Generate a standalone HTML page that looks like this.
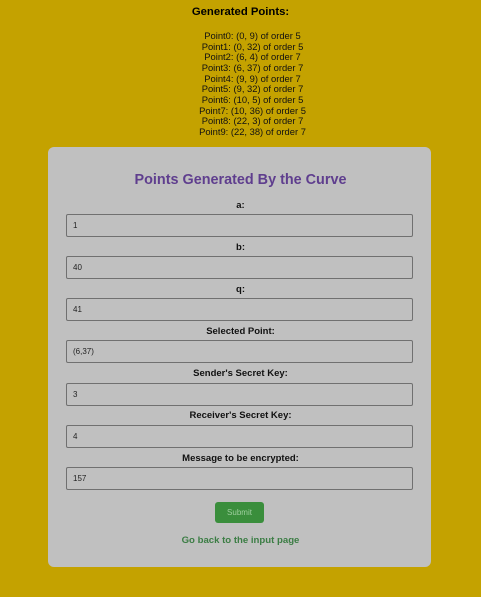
<!DOCTYPE html>
<html><head><style>
body{margin:0;background:#c4a200;font-family:"Liberation Sans",sans-serif;width:481px;height:597px;overflow:hidden;position:relative}
.h{position:absolute;top:6px;left:0;width:481px;text-align:center;font-weight:bold;font-size:11.3px;color:#000}
.pts{position:absolute;top:31px;left:12px;width:481px;text-align:center;font-size:9.4px;line-height:10.67px;color:#111}
.card{position:absolute;left:48px;top:147px;width:383px;height:420px;background:#c0c0c0;border-radius:6px}
.t{position:absolute;top:172px;left:0;width:481px;text-align:center;font-size:14.4px;font-weight:bold;color:#5f3e8e}
.l{position:absolute;left:0;width:481px;text-align:center;font-size:9.5px;font-weight:bold;color:#111}
.i{position:absolute;left:66px;width:345px;height:21px;border:1px solid #707070;border-radius:2px;font-size:8px;line-height:21px;text-indent:6px;color:#222;box-sizing:content-box}
.b{position:absolute;left:215px;top:502px;width:49px;height:21px;background:#3a8e3c;border-radius:3px;color:#9fcf9f;font-size:8px;line-height:21px;text-align:center}
.g{position:absolute;top:535px;left:0;width:481px;text-align:center;font-size:9.6px;font-weight:bold;color:#3b7d44}
</style></head><body>
<div class="h">Generated Points:</div>
<div class="pts">Point0: (0, 9) of order 5<br>Point1: (0, 32) of order 5<br>Point2: (6, 4) of order 7<br>Point3: (6, 37) of order 7<br>Point4: (9, 9) of order 7<br>Point5: (9, 32) of order 7<br>Point6: (10, 5) of order 5<br>Point7: (10, 36) of order 5<br>Point8: (22, 3) of order 7<br>Point9: (22, 38) of order 7</div>
<div class="card"></div>
<div class="t">Points Generated By the Curve</div>
<div class="l" style="top:200px">a:</div><div class="i" style="top:214px">1</div>
<div class="l" style="top:242px">b:</div><div class="i" style="top:256px">40</div>
<div class="l" style="top:284px">q:</div><div class="i" style="top:298px">41</div>
<div class="l" style="top:326px">Selected Point:</div><div class="i" style="top:340px">(6,37)</div>
<div class="l" style="top:368px">Sender's Secret Key:</div><div class="i" style="top:383px">3</div>
<div class="l" style="top:410px">Receiver's Secret Key:</div><div class="i" style="top:425px">4</div>
<div class="l" style="top:453px">Message to be encrypted:</div><div class="i" style="top:467px">157</div>
<div class="b">Submit</div>
<div class="g">Go back to the input page</div>
</body></html>
